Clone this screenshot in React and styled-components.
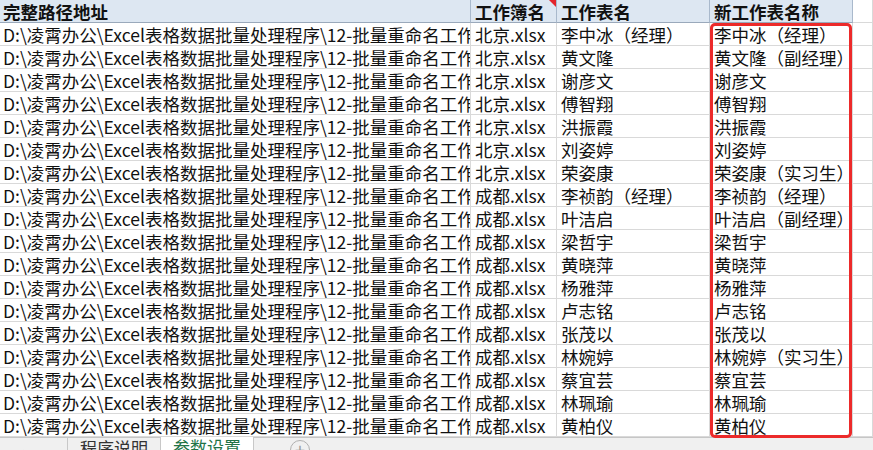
import React from 'react';
import styled, { createGlobalStyle } from 'styled-components';

const GlobalStyle = createGlobalStyle`
  html, body {
    margin: 0;
    padding: 0;
    overflow: hidden;
    background: #ffffff;
  }
  body {
    font-family: "Noto Sans CJK SC", "Noto Sans", sans-serif;
    color: #111;
  }
`;

const Page = styled.div`
  width: 873px;
  height: 450px;
  display: flex;
  flex-direction: column;
  overflow: hidden;
`;

const Sheet = styled.div`
  display: grid;
  grid-template-columns: 471px 86px 153px 143px 1fr;
  grid-template-rows: repeat(19, 23px);
  flex: none;
`;

const Cell = styled.div`
  box-sizing: border-box;
  border-right: 1px solid ${(p) => (p.$head ? '#a9b9cc' : '#d9d9d9')};
  border-bottom: 1px solid ${(p) => (p.$head ? '#9aa9bb' : '#d9d9d9')};
  background: ${(p) => (p.$head ? '#dde7f2' : '#ffffff')};
  font-size: 17.5px;
  font-weight: ${(p) => (p.$head ? 700 : 400)};
  line-height: 23px;
  padding-left: ${(p) => p.$pad || 3}px;
  white-space: nowrap;
  overflow: hidden;
  position: relative;
  grid-column: ${(p) => p.$col};
  grid-row: ${(p) => p.$row};
`;

const CommentMark = styled.span`
  position: absolute;
  right: 0;
  top: 0;
  width: 0;
  height: 0;
  border-top: 7px solid #e3242b;
  border-left: 7px solid transparent;
`;

const Highlight = styled.div`
  grid-column: 4;
  grid-row: 2 / 20;
  box-sizing: border-box;
  margin: 0 1px -1px 0;
  border: 3px solid #ec2a2a;
  border-radius: 5px;
  pointer-events: none;
  z-index: 2;
`;

const TabBar = styled.div`
  flex: 1;
  background: #f0f0f0;
  border-top: 1px solid #c6c6c6;
  display: flex;
  align-items: flex-start;
  font-size: 17px;
  line-height: 20px;
`;

const NavArrows = styled.div`
  width: 68px;
  box-sizing: border-box;
  border-right: 1px solid #c8c8c8;
  height: 30px;
  display: flex;
  padding: 6px 0 0 22px;
  color: #b5b5b5;
  font-size: 11px;
`;

const Tab = styled.div`
  padding: 0 12px;
  height: 30px;
  margin-top: ${(p) => (p.$active ? '-1px' : '0')};
  box-sizing: border-box;
  background: ${(p) => (p.$active ? '#ffffff' : 'transparent')};
  color: ${(p) => (p.$active ? '#217346' : '#333')};
  border-right: 1px solid #c8c8c8;
  display: flex;
  align-items: flex-start;
`;

const AddButton = styled.div`
  margin-left: 36px;
  margin-top: 2px;
  width: 20px;
  height: 20px;
  border-radius: 50%;
  border: 1px solid #b0b0b0;
  box-sizing: border-box;
  color: #9a9a9a;
  font-size: 18px;
  line-height: 17px;
  text-align: center;
`;

const base = 'D:\\凌霄办公\\Excel表格数据批量处理程序\\12-批量重命名工作表\\';

const rows = [
  ['北京.xlsx', '李中冰（经理）', '李中冰（经理）'],
  ['北京.xlsx', '黄文隆', '黄文隆（副经理）'],
  ['北京.xlsx', '谢彦文', '谢彦文'],
  ['北京.xlsx', '傅智翔', '傅智翔'],
  ['北京.xlsx', '洪振霞', '洪振霞'],
  ['北京.xlsx', '刘姿婷', '刘姿婷'],
  ['北京.xlsx', '荣姿康', '荣姿康（实习生）'],
  ['成都.xlsx', '李祯韵（经理）', '李祯韵（经理）'],
  ['成都.xlsx', '叶洁启', '叶洁启（副经理）'],
  ['成都.xlsx', '梁哲宇', '梁哲宇'],
  ['成都.xlsx', '黄晓萍', '黄晓萍'],
  ['成都.xlsx', '杨雅萍', '杨雅萍'],
  ['成都.xlsx', '卢志铭', '卢志铭'],
  ['成都.xlsx', '张茂以', '张茂以'],
  ['成都.xlsx', '林婉婷', '林婉婷（实习生）'],
  ['成都.xlsx', '蔡宜芸', '蔡宜芸'],
  ['成都.xlsx', '林珮瑜', '林珮瑜'],
  ['成都.xlsx', '黄柏仪', '黄柏仪'],
];

export default function App() {
  return (
    <Page>
      <GlobalStyle />
      <Sheet>
        <Cell $head $col={1} $row={1}>完整路径地址</Cell>
        <Cell $head $col={2} $row={1} $pad={4}>
          工作簿名
          <CommentMark />
        </Cell>
        <Cell $head $col={3} $row={1} $pad={4}>工作表名</Cell>
        <Cell $head $col={4} $row={1} $pad={4}>新工作表名称</Cell>
        <Cell $col={5} $row={1} />
        {rows.map(([book, sheet, next], i) => (
          <React.Fragment key={i}>
            <Cell $col={1} $row={i + 2}>{base + book}</Cell>
            <Cell $col={2} $row={i + 2} $pad={4}>{book}</Cell>
            <Cell $col={3} $row={i + 2} $pad={4}>{sheet}</Cell>
            <Cell $col={4} $row={i + 2} $pad={4}>{next}</Cell>
            <Cell $col={5} $row={i + 2} />
          </React.Fragment>
        ))}
        <Highlight />
      </Sheet>
      <TabBar>
        <NavArrows>▶</NavArrows>
        <Tab>程序说明</Tab>
        <Tab $active>参数设置</Tab>
        <AddButton>+</AddButton>
      </TabBar>
    </Page>
  );
}
